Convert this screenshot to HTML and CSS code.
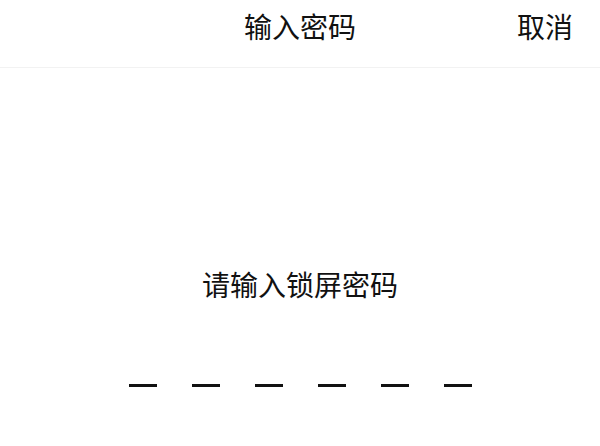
FILE: index.html
```html
<!DOCTYPE html>
<html lang="zh-CN">
<head>
<meta charset="utf-8">
<link rel="stylesheet" href="styles.css">
</head>
<body>
<div class="page">
  <header class="topbar">
    <div class="title">输入密码</div>
    <div class="cancel">取消</div>
  </header>
  <main class="content">
    <div class="prompt">请输入锁屏密码</div>
    <div class="slots">
      <span class="slot"></span>
      <span class="slot"></span>
      <span class="slot"></span>
      <span class="slot"></span>
      <span class="slot"></span>
      <span class="slot"></span>
    </div>
  </main>
</div>
</body>
</html>
```
FILE: styles.css
```css
html, body {
  margin: 0;
  padding: 0;
  background: #ffffff;
}
body {
  font-family: "Noto Sans CJK SC", "Noto Sans", sans-serif;
  color: #111111;
  width: 600px;
  height: 446px;
  overflow: hidden;
}
.page {
  display: flex;
  flex-direction: column;
  height: 100%;
}
.topbar {
  position: relative;
  height: 67px;
  border-bottom: 1px solid #f2f2f2;
  display: flex;
  align-items: flex-start;
  justify-content: center;
}
.title {
  font-size: 28px;
  line-height: 52px;
}
.cancel {
  position: absolute;
  right: 27px;
  top: 0;
  font-size: 28px;
  line-height: 52px;
}
.content {
  display: flex;
  flex-direction: column;
  align-items: center;
  padding-top: 200px;
}
.prompt {
  font-size: 28px;
  line-height: 32px;
}
.slots {
  display: flex;
  gap: 35px;
  margin-top: 84px;
}
.slot {
  display: block;
  width: 28px;
  height: 3px;
  background: #111111;
}
```
